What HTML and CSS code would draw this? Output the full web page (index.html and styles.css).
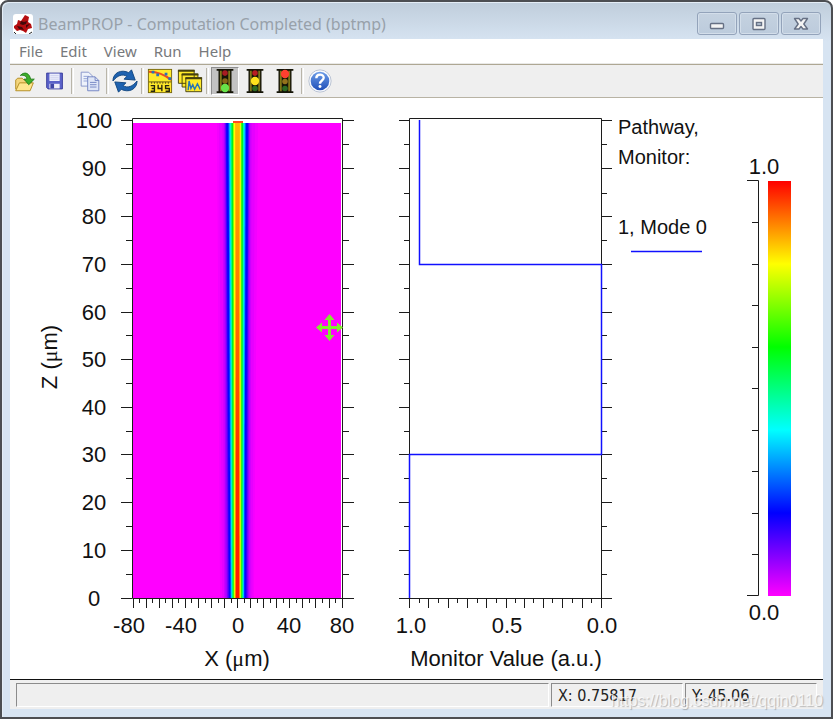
FILE: index.html
```html
<!DOCTYPE html>
<html lang="en">
<head>
<meta charset="utf-8">
<title>BeamPROP - Computation Completed (bptmp)</title>
<link rel="stylesheet" href="styles.css">
</head>
<body>
<div class="window">
  <header class="titlebar">
    <svg class="app-icon" viewBox="0 0 20 20" aria-hidden="true">
      <rect width="20" height="20" rx="3" fill="#fff"/>
      <path d="M1 12l3-2 1-4 3 1 4-6 4 2-1 5 3 2 1 4-4 1-2 4-3-2-3-1-3 1-3-3z" fill="#b50d10"/>
      <path d="M8 7l3 1 3-1-1 3-3 1-3-1zM4 12l5 1 2 3-5-1zM13 11l4-1-4 4z" fill="#42080a"/>
      <path d="M1 18l2 2M19 18l-3 2" stroke="#222" stroke-width="1"/>
    </svg>
    <h1 class="title">BeamPROP - Computation Completed (bptmp)</h1>
    <div class="window-controls">
      <button type="button" class="window-button" aria-label="Minimize">
        <svg viewBox="0 0 16 14"><rect x="1.500" y="6.500" width="13" height="5" rx="1" fill="#f4f4f4" stroke="#667084" stroke-width="1.400"/></svg>
      </button>
      <button type="button" class="window-button" aria-label="Maximize">
        <svg viewBox="0 0 16 14"><rect x="2" y="1.500" width="12" height="11" rx="1" fill="#f4f4f4" stroke="#667084" stroke-width="1.400"/><rect x="5.500" y="5.500" width="5" height="3" fill="#b9c8d9" stroke="#667084" stroke-width="1.400"/></svg>
      </button>
      <button type="button" class="window-button" aria-label="Close">
        <svg viewBox="0 0 16 14"><path d="M1.500 1.500h4.500l2 2.500 2-2.500h4.500l-3.700 5.500 3.700 5h-4.500l-2-2.500-2 2.500H1.500l3.700-5z" fill="#f4f4f4" stroke="#667084" stroke-width="1.400" stroke-linejoin="round"/></svg>
      </button>
    </div>
  </header>

  <div class="client">
    <nav class="menubar">
      <button type="button">File</button>
      <button type="button">Edit</button>
      <button type="button">View</button>
      <button type="button">Run</button>
      <button type="button">Help</button>
    </nav>

    <div class="toolbar" role="toolbar" aria-label="Main">
      <button type="button" class="tool" aria-label="Open">
        <svg viewBox="0 0 28 28"><path d="M4 23V13l2-2h5l2 2h8v4" fill="#f3d57c" stroke="#b28a1e"/><path d="M4 24.500l4-8.500h15l-3.500 8.500z" fill="#ffe68f" stroke="#b28a1e"/><path d="M9 8c5-5 10-2 11 4h4l-6 6-5-6h3c0-3-3-5-7-4z" fill="#3dae2b" stroke="#23801a"/></svg>
      </button>
      <button type="button" class="tool" aria-label="Save">
        <svg viewBox="0 0 28 28"><path d="M5 5.500h17v17H6.500L5 21z" fill="#5b62c9" stroke="#3a3f9c"/><path d="M8 6h11v8H8z" fill="#eef0fc"/><path d="M9 8h9M9 10h9M9 12h9" stroke="#cdd1ee"/><path d="M8 17h11v5H8z" fill="#f0f0f8"/><path d="M9 17h4v5H9z" fill="#4046a6"/></svg>
      </button>
      <span class="separator"></span>
      <button type="button" class="tool" aria-label="Copy">
        <svg viewBox="0 0 28 28"><path d="M4.500 4.500h8l4 4v11h-12z" fill="#eef2fb" stroke="#8493c9"/><path d="M7 9h6M7 11.500h7M7 14h7" stroke="#8fa0d6"/><path d="M11.500 9.500h8l4 4v11h-12z" fill="#dfe6f7" stroke="#7384c2"/><path d="M19.500 9.500v4h4M14 15.500h7M14 18h7M14 20.500h7" fill="none" stroke="#7384c2"/></svg>
      </button>
      <span class="separator"></span>
      <button type="button" class="tool" aria-label="Refresh">
        <svg viewBox="0 0 28 28"><path d="M1 14C1 5 10 1 18 5l3-3 4 11-12-1 3-3C11 6 6 8 1 14z" fill="#1e62b0" stroke="#104580"/><path d="M27 14c0 9-9 13-17 9l-3 3-4-11 12 1-3 3c5 3 10 1 15-5z" fill="#1e62b0" stroke="#104580"/></svg>
      </button>
      <span class="separator"></span>
      <button type="button" class="tool" aria-label="Scale">
        <svg viewBox="0 0 28 28"><rect x="1.500" y="1.500" width="25" height="25" fill="#ffe92a" stroke="#77670c"/><path d="M2 4c9 0 16 2 24 9" fill="none" stroke="#f04b1c" stroke-width="2"/><path d="M5 3h3v3H5zM10 6h3v3h-3zM19 5h3v3h-3zM23 10h3v3h-3z" fill="#2a72b8"/><path d="M2 15h24M5 15v2M8 15v2M11 15v2M14 15v2M17 15v2M20 15v2M23 15v2" stroke="#5c5214"/><path d="M4 19h4v6H4M5 22h3M12 18v4h4M16 18v7M24 19h-4v3h4v3h-4" fill="none" stroke="#29260f" stroke-width="1.500"/></svg>
      </button>
      <button type="button" class="tool" aria-label="Graphs">
        <svg viewBox="0 0 28 28"><g fill="#ffe92a" stroke="#46400c"><path d="M1.500 2.500h17v14h-17zM5.500 6.500h17v14h-17z"/><path d="M9.500 10.500h17v15h-17z"/></g><path d="M1 3h18M5 7h18M9 11h18" stroke="#46400c" stroke-width="2"/><path d="M12 24l1-10 2 8 2-4 2 5 3-6 3 6" fill="none" stroke="#2674b4" stroke-width="1.500"/></svg>
      </button>
      <span class="separator"></span>
      <button type="button" class="tool pressed" aria-label="Go" aria-pressed="true">
        <svg viewBox="0 0 28 28"><path d="M5 1h18v2h-2v22h2v2H5v-2h2V3H5z" fill="#151508"/><path d="M9.500 3v22M18.500 3v22" stroke="#817817" stroke-width="2"/><circle cx="14" cy="5.500" r="3" fill="#a81c22"/><circle cx="14" cy="14" r="3" fill="#876816"/><circle cx="14" cy="21.500" r="4.500" fill="#67e449"/></svg>
      </button>
      <button type="button" class="tool" aria-label="Pause">
        <svg viewBox="0 0 28 28"><path d="M5 1h18v2h-2v22h2v2H5v-2h2V3H5z" fill="#151508"/><path d="M9.500 3v22M18.500 3v22" stroke="#817817" stroke-width="2"/><circle cx="14" cy="5.500" r="3" fill="#b91c22"/><circle cx="14" cy="14" r="4.500" fill="#ffe11c"/><circle cx="14" cy="22" r="3" fill="#2c6b24"/></svg>
      </button>
      <button type="button" class="tool" aria-label="Stop">
        <svg viewBox="0 0 28 28"><path d="M5 1h18v2h-2v22h2v2H5v-2h2V3H5z" fill="#151508"/><path d="M9.500 3v22M18.500 3v22" stroke="#817817" stroke-width="2"/><circle cx="14" cy="6.500" r="4.500" fill="#ff4030"/><circle cx="14" cy="14.500" r="3" fill="#94721b"/><circle cx="14" cy="22" r="3" fill="#2c6b24"/></svg>
      </button>
      <span class="separator"></span>
      <button type="button" class="tool" aria-label="Help contents">
        <svg viewBox="0 0 28 28"><defs><linearGradient id="help-fill" x2="0" y2="1"><stop stop-color="#6c9de8"/><stop offset="1" stop-color="#1f4fb8"/></linearGradient></defs><circle cx="14" cy="14" r="12" fill="#f8fafd" stroke="#b5bfd0"/><circle cx="14" cy="14" r="10" fill="url(#help-fill)"/><path d="M10 11c0-5 8-5 8-.5 0 3-4 3-4 6.500" fill="none" stroke="#fff" stroke-width="2.500"/><circle cx="14" cy="20" r="1.600" fill="#fff"/></svg>
      </button>
    </div>

    <main class="plots">
      <svg class="chart" viewBox="10 98 813 581" role="img" aria-label="Beam propagation and monitor value">
        <defs>
          <linearGradient id="scale" x2="0" y2="1">
            <stop stop-color="#f00"/><stop offset=".2" stop-color="#ff0"/><stop offset=".4" stop-color="#0f0"/>
            <stop offset=".6" stop-color="#0ff"/><stop offset=".8" stop-color="#00f"/><stop offset="1" stop-color="#f0f"/>
          </linearGradient>
          <linearGradient id="core" x2="0" y2="1">
            <stop stop-color="#ffb800"/><stop offset=".35" stop-color="#ff7a00"/><stop offset=".7" stop-color="#ff3000"/><stop offset="1" stop-color="#ff1800"/>
          </linearGradient>
          <path id="ticks-left" d="M0 120.500h-11M0 168.500h-11M0 216.500h-11M0 264.500h-11M0 312.500h-11M0 359.500h-11M0 407.500h-11M0 454.500h-11M0 502.500h-11M0 550.500h-11M0 598.500h-11M0 144.500h-6M0 193.500h-6M0 240.500h-6M0 288.500h-6M0 335.500h-6M0 383.500h-6M0 431.500h-6M0 478.500h-6M0 526.500h-6M0 574.500h-6"/>
          <path id="ticks-right" d="M0 120.500h11M0 168.500h11M0 216.500h11M0 264.500h11M0 312.500h11M0 359.500h11M0 407.500h11M0 454.500h11M0 502.500h11M0 550.500h11M0 598.500h11M0 144.500h6M0 193.500h6M0 240.500h6M0 288.500h6M0 335.500h6M0 383.500h6M0 431.500h6M0 478.500h6M0 526.500h6M0 574.500h6"/>
        </defs>

        <!-- Field intensity: nested contours, widening towards the top -->
        <rect x="133" y="123" width="208" height="475" fill="#f0f"/>
        <path d="M217 123H258L254 598H220z" fill="#f400ff"/>
        <path d="M219 123H255L252.500 598H222z" fill="#e600ff"/>
        <path d="M222.500 123H251.500L250.500 598H224z" fill="#cc00ff"/>
        <path d="M224 123H250L249 598H225.500z" fill="#a600ff"/>
        <path d="M225 123H249L248 598H227z" fill="#7300ff"/>
        <path d="M225.800 123H248.500L246.800 598H228.300z" fill="#3000ff"/>
        <path d="M226.500 123H247.800L245.800 598H229.200z" fill="#0008ff"/>
        <path d="M228.500 123H245.800L244.300 598H230.500z" fill="#0080ff"/>
        <path d="M229.500 123H244.800L243.600 598H231.300z" fill="#00e0ff"/>
        <path d="M230.500 123H243.800L243 598H232z" fill="#00ffa0"/>
        <path d="M231.500 123H243L242.300 598H232.700z" fill="#00f020"/>
        <path d="M233 123H241.500L241.300 598H233.600z" fill="#80ff00"/>
        <path d="M233.800 123H240.800L240.500 598H234.300z" fill="#ffff00"/>
        <path d="M235 123H240L239.900 598H235z" fill="#ffc000"/>
        <path d="M236 123H239L239.400 598H235.600z" fill="url(#core)"/>
        <path d="M233 122h10" stroke="#ff4a20" stroke-width="2"/>

        <g class="axis">
          <path d="M132.500 118.500H342.500V598.500H132.500z"/>
          <use href="#ticks-left" x="132"/>
          <use href="#ticks-right" x="343"/>
          <path d="M133.500 598v10M146.500 598v10M159.500 598v10M172.500 598v10M185.500 598v10M198.500 598v10M211.500 598v10M224.500 598v10M237.500 598v10M250.500 598v10M263.500 598v10M276.500 598v10M289.500 598v10M302.500 598v10M315.500 598v10M329.500 598v10M342.500 598v10M139.500 598v5M152.500 598v5M165.500 598v5M178.500 598v5M191.500 598v5M205.500 598v5M218.500 598v5M231.500 598v5M244.500 598v5M257.500 598v5M270.500 598v5M283.500 598v5M296.500 598v5M309.500 598v5M322.500 598v5M335.500 598v5"/>
          <path d="M409.500 118.500H601.500V598.500H409.500z"/>
          <use href="#ticks-left" x="410"/>
          <use href="#ticks-right" x="601"/>
          <path d="M409.500 598v10M428.500 598v10M448.500 598v10M467.500 598v10M486.500 598v10M506.500 598v10M524.500 598v10M543.500 598v10M562.500 598v10M582.500 598v10M601.500 598v10M419.500 598v5M438.500 598v5M457.500 598v5M477.500 598v5M496.500 598v5M515.500 598v5M533.500 598v5M552.500 598v5M572.500 598v5M591.500 598v5"/>
          <path d="M747 180.500H758.500V595.500H747M752 222.500h6M752 264.500h6M752 305.500h6M752 347.500h6M752 388.500h6M752 430.500h6M752 471.500h6M752 513.500h6M752 554.500h6"/>
        </g>

        <path class="monitor-line" d="M419.500 120V264.500H601.500V454.500H409.500V598"/>
        <path class="monitor-line" d="M631 251.500H702"/>
        <rect x="768" y="181" width="23" height="415" fill="url(#scale)"/>
        <path d="M316 327.500l6-5v3.500h6v-6h-3.500l5-6 5 6H331v6h6v-3.500l6 5-6 5V329h-6v6h3.500l-5 6-5-6h3.500v-6h-6v3.500z" fill="#80e830"/>

        <g class="labels">
          <text x="94" y="128">100</text>
          <text x="94" y="176">90</text>
          <text x="94" y="224">80</text>
          <text x="94" y="272">70</text>
          <text x="94" y="320">60</text>
          <text x="94" y="367">50</text>
          <text x="94" y="415">40</text>
          <text x="94" y="462">30</text>
          <text x="94" y="510">20</text>
          <text x="94" y="558">10</text>
          <text x="94" y="606">0</text>
          <text x="129" y="633">-80</text>
          <text x="181" y="633">-40</text>
          <text x="238" y="633">0</text>
          <text x="289" y="633">40</text>
          <text x="342" y="633">80</text>
          <text x="237" y="666">X (<tspan class="mu">μ</tspan>m)</text>
          <text transform="translate(57 357) rotate(-90)">Z (<tspan class="mu">μ</tspan>m)</text>
          <text x="411" y="633">1.0</text>
          <text x="507" y="633">0.5</text>
          <text x="602" y="633">0.0</text>
          <text x="506" y="666">Monitor Value (a.u.)</text>
          <text x="764" y="174">1.0</text>
          <text x="764" y="620">0.0</text>
        </g>
        <g class="legend">
          <text x="618" y="134">Pathway,</text>
          <text x="618" y="164">Monitor:</text>
          <text x="618" y="234">1, Mode 0</text>
        </g>
      </svg>
    </main>

    <footer class="statusbar">
      <span class="cell message"></span>
      <span class="cell coord">X: 0.75817</span>
      <span class="cell coord">Y: 45.06</span>
    </footer>
  </div>
  <span class="watermark">https://blog.csdn.net/qqin0110</span>
</div>
</body>
</html>
```

FILE: styles.css
```css
* {
  box-sizing: border-box;
}

body {
  margin: 0;
  background: #fff;
  font-family: "Noto Sans", "Open Sans", sans-serif;
}

button {
  margin: 0;
  padding: 0;
  border: 0;
  background: none;
  color: inherit;
  font: inherit;
}

.window {
  position: relative;
  display: flex;
  flex-direction: column;
  height: 100vh;
  padding: 0 8px 8px;
  border: 2px solid #4c4e52;
  border-radius: 8px 8px 0 0;
  background: linear-gradient(#bfcddb, #d7e4f2 40px);
  box-shadow: inset 1px 1px 0 #e4edf6;
}

.titlebar {
  display: flex;
  flex: none;
  align-items: center;
  height: 37px;
  padding: 6px 2px 0 3px;
}

.app-icon {
  width: 20px;
  height: 20px;
}

.title {
  flex: 1;
  margin: 0 0 0 5px;
  color: #98a1aa;
  font-size: 16px;
  font-weight: 400;
  line-height: 22px;
  white-space: nowrap;
}

.window-controls {
  display: flex;
  gap: 2px;
}

.window-button {
  display: grid;
  place-items: center;
  width: 40px;
  height: 23px;
  border: 1px solid #93a3ba;
  border-radius: 3px;
  background: linear-gradient(#c5d2e0, #bccbdc);
  box-shadow: inset 0 0 0 1px #d3deea;
}

.window-button svg {
  width: 16px;
  height: 14px;
}

.client {
  display: flex;
  flex: 1;
  flex-direction: column;
  min-height: 0;
  background: #fff;
}

.menubar {
  display: flex;
  flex: none;
  gap: 17px;
  height: 25px;
  padding: 0 9px;
  border-bottom: 1px solid #e9e9e7;
  color: #77797c;
  font-size: 15px;
  line-height: 24px;
}

.toolbar {
  display: flex;
  flex: none;
  align-items: center;
  gap: 2px;
  height: 34px;
  padding: 0 1px;
  border-top: 1px solid #aea793;
  border-bottom: 1px solid #b8b3a4;
  background: #efefef;
}

.tool {
  display: grid;
  place-items: center;
  width: 28px;
  height: 28px;
}

.tool svg {
  width: 26px;
  height: 26px;
}

.tool.pressed {
  border: 1px solid #fff;
  border-top-color: #8e8e8e;
  border-left-color: #8e8e8e;
  background: #c2c2c2;
}

.separator {
  width: 3px;
  height: 26px;
  border-left: 1px solid #b9b5a9;
  border-right: 1px solid #fff;
}

.plots {
  flex: 1;
  min-height: 0;
}

.chart {
  display: block;
  width: 100%;
  height: 100%;
}

.axis {
  fill: none;
  stroke: #1c1c1c;
}

.monitor-line {
  fill: none;
  stroke: #1010ff;
  stroke-width: 1.5;
}

.labels,
.legend {
  fill: #111;
  font-family: "Liberation Sans", Arial, sans-serif;
  font-size: 22px;
}

.labels {
  text-anchor: middle;
}

.legend {
  font-size: 20px;
}

.mu {
  font-family: "Liberation Serif", "Times New Roman", serif;
}

.statusbar {
  display: flex;
  flex: none;
  gap: 2px;
  height: 30px;
  padding: 3px 6px 2px;
  border-top: 1px solid #111;
  background: #efefef;
}

.cell {
  padding: 0 6px;
  border: 1px solid #fff;
  border-top-color: #8b8b8b;
  border-left-color: #8b8b8b;
  color: #222;
  font-family: "DejaVu Sans Condensed", "Noto Sans", sans-serif;
  font-size: 16px;
  line-height: 23px;
  white-space: nowrap;
}

.message {
  flex: 1;
}

.coord {
  width: 132px;
}

.watermark {
  position: absolute;
  right: 8px;
  bottom: 7px;
  color: rgba(255, 255, 255, 0.75);
  font-family: "Liberation Sans", Arial, sans-serif;
  font-size: 16px;
  line-height: 18px;
  text-shadow: 1px 1px 1px rgba(120, 120, 120, 0.5);
  pointer-events: none;
}
```
